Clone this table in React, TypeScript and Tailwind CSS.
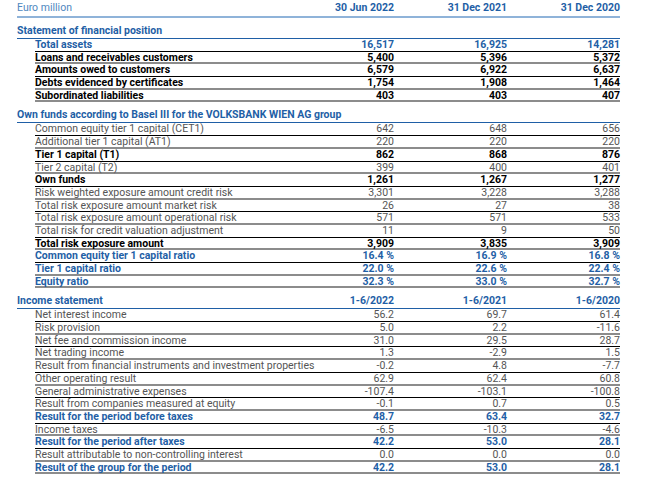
type Kind = "blue" | "bold" | "light";
type Row = [string, string, string, string, Kind];

const financial: Row[] = [
  ["Total assets", "16,517", "16,925", "14,281", "blue"],
  ["Loans and receivables customers", "5,400", "5,396", "5,372", "bold"],
  ["Amounts owed to customers", "6,579", "6,922", "6,637", "bold"],
  ["Debts evidenced by certificates", "1,754", "1,908", "1,464", "bold"],
  ["Subordinated liabilities", "403", "403", "407", "bold"],
];

const ownFunds: Row[] = [
  ["Common equity tier 1 capital (CET1)", "642", "648", "656", "light"],
  ["Additional tier 1 capital (AT1)", "220", "220", "220", "light"],
  ["Tier 1 capital (T1)", "862", "868", "876", "bold"],
  ["Tier 2 capital (T2)", "399", "400", "401", "light"],
  ["Own funds", "1,261", "1,267", "1,277", "bold"],
  ["Risk weighted exposure amount credit risk", "3,301", "3,228", "3,288", "light"],
  ["Total risk exposure amount market risk", "26", "27", "38", "light"],
  ["Total risk exposure amount operational risk", "571", "571", "533", "light"],
  ["Total risk for credit valuation adjustment", "11", "9", "50", "light"],
  ["Total risk exposure amount", "3,909", "3,835", "3,909", "bold"],
  ["Common equity tier 1 capital ratio", "16.4 %", "16.9 %", "16.8 %", "blue"],
  ["Tier 1 capital ratio", "22.0 %", "22.6 %", "22.4 %", "blue"],
  ["Equity ratio", "32.3 %", "33.0 %", "32.7 %", "blue"],
];

const income: Row[] = [
  ["Net interest income", "56.2", "69.7", "61.4", "light"],
  ["Risk provision", "5.0", "2.2", "-11.6", "light"],
  ["Net fee and commission income", "31.0", "29.5", "28.7", "light"],
  ["Net trading income", "1.3", "-2.9", "1.5", "light"],
  ["Result from financial instruments and investment properties", "-0.2", "4.8", "-7.7", "light"],
  ["Other operating result", "62.9", "62.4", "60.8", "light"],
  ["General administrative expenses", "-107.4", "-103.1", "-100.8", "light"],
  ["Result from companies measured at equity", "-0.1", "0.7", "0.5", "light"],
  ["Result for the period before taxes", "48.7", "63.4", "32.7", "blue"],
  ["Income taxes", "-6.5", "-10.3", "-4.6", "light"],
  ["Result for the period after taxes", "42.2", "53.0", "28.1", "blue"],
  ["Result attributable to non-controlling interest", "0.0", "0.0", "0.0", "light"],
  ["Result of the group for the period", "42.2", "53.0", "28.1", "blue"],
];

const kindClass: Record<Kind, string> = {
  blue: "text-[#1f5fa6] font-bold",
  bold: "text-black font-bold",
  light: "text-[#555555] font-normal",
};

function Section({ title, cols, rows }: { title: string; cols?: string[]; rows: Row[] }) {
  return (
    <div>
      <div className="grid grid-cols-[minmax(0,1fr)_113px_113px_113px] h-[21px] items-end pb-[2px] border-b border-[#1f5fa6] text-[#1f5fa6] font-bold">
        <span className="whitespace-nowrap">{title}</span>
        {cols?.map((c) => (
          <span key={c} className="text-right">{c}</span>
        ))}
      </div>
      {rows.map((r, i) => {
        const last = i === rows.length - 1;
        const line = last
          ? "border-b-2 border-[#8c8c8c]"
          : i % 2 === 0
          ? "border-b border-black"
          : "border-b-2 border-[#8c8c8c]";
        return (
          <div
            key={r[0]}
            className={`ml-[18px] grid grid-cols-[minmax(0,1fr)_113px_113px_113px] h-[12.7px] items-end pb-[1px] ${line} ${kindClass[r[4]]}`}
          >
            <span className="whitespace-nowrap">{r[0]}</span>
            <span className="text-right">{r[1]}</span>
            <span className="text-right">{r[2]}</span>
            <span className="text-right">{r[3]}</span>
          </div>
        );
      })}
    </div>
  );
}

export default function App() {
  return (
    <div
      className="w-[666px] h-[479px] bg-white pl-[17px] text-[10.5px] leading-[11px]"
      style={{ fontFamily: "Roboto, 'DejaVu Sans', sans-serif" }}
    >
      <div className="w-[603px]">
        <div className="grid grid-cols-[minmax(0,1fr)_113px_113px_113px] h-[18px] items-end pb-[3px] border-b-2 border-[#8fb3d9]">
          <span className="text-[#4f88c0]">Euro million</span>
          <span className="text-right text-[#1f5fa6] font-bold">30 Jun 2022</span>
          <span className="text-right text-[#1f5fa6] font-bold">31 Dec 2021</span>
          <span className="text-right text-[#1f5fa6] font-bold">31 Dec 2020</span>
        </div>
        <Section title="Statement of financial position" rows={financial} />
        <Section title="Own funds according to Basel III for the VOLKSBANK WIEN AG group" rows={ownFunds} />
        <Section title="Income statement" cols={["1-6/2022", "1-6/2021", "1-6/2020"]} rows={income} />
      </div>
    </div>
  );
}
